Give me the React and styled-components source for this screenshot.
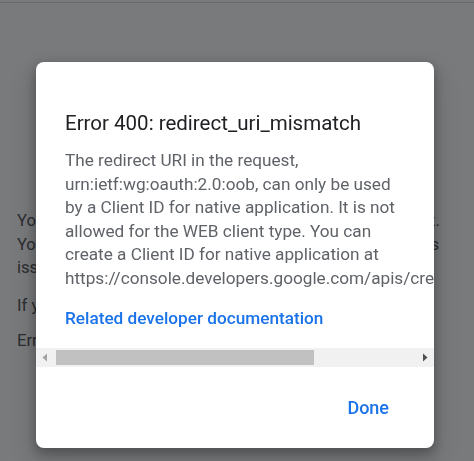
import React from "react";
import styled, { createGlobalStyle } from "styled-components";

const Global = createGlobalStyle`
  html, body { margin: 0; padding: 0; background: #ffffff; }
  body { font-family: Roboto, "Noto Sans", Arial, sans-serif; overflow: hidden; }
  * { box-sizing: border-box; }
`;

const Page = styled.div`
  width: 474px;
  height: 461px;
  background: #ffffff;
  position: relative;
`;

const TopRule = styled.div`
  height: 3px;
  border-bottom: 1px solid #d2d4d8;
`;

const PageBody = styled.div`
  padding: 206px 0 0 17px;
  color: #3c4043;
  font-size: 16.6px;
  line-height: 23.5px;
`;

const PagePara = styled.p`
  margin: 0 0 ${(p) => p.$gap || 14}px 0;
  white-space: nowrap;
`;

const PageLine = styled.span`
  display: block;
  letter-spacing: ${(p) => p.$tight || 0}px;
`;

const Overlay = styled.div`
  position: fixed;
  inset: 0;
  background: rgba(32, 33, 36, 0.6);
  display: flex;
  align-items: flex-start;
  justify-content: flex-start;
  padding: 62px 0 0 36px;
`;

const Dialog = styled.div`
  width: 398px;
  height: 386px;
  background: #ffffff;
  border-radius: 8px;
  box-shadow: 0 4px 10px 2px rgba(0, 0, 0, 0.22), 0 12px 24px 4px rgba(0, 0, 0, 0.14);
  display: flex;
  flex-direction: column;
  overflow: hidden;
`;

const ScrollArea = styled.div`
  flex: 0 0 auto;
  overflow: hidden;
  padding: 49px 0 0 29px;
  height: 286px;
`;

const Title = styled.h1`
  margin: 0;
  font-family: Roboto, "Noto Sans", Arial, sans-serif;
  font-weight: 400;
  font-size: 20.5px;
  line-height: 24px;
  color: #202124;
  white-space: nowrap;
`;

const Body = styled.p`
  margin: 14px 0 0 0;
  font-size: 17.2px;
  line-height: 23.6px;
  color: #5f6368;
  white-space: nowrap;
`;

const DocLink = styled.a`
  display: block;
  margin-top: 15px;
  font-size: 17.2px;
  line-height: 24px;
  font-weight: 500;
  color: #1a73e8;
  text-decoration: none;
  white-space: nowrap;
`;

const Scrollbar = styled.div`
  height: 19px;
  background: #f1f1f1;
  display: flex;
  align-items: center;
  position: relative;
`;

const ScrollButton = styled.div`
  width: 17px;
  height: 19px;
  display: flex;
  align-items: center;
  justify-content: center;
  flex: 0 0 auto;
`;

const Track = styled.div`
  flex: 1;
  height: 19px;
  display: flex;
  align-items: center;
  padding-left: 3px;
`;

const Thumb = styled.div`
  height: 15px;
  background: #c1c1c1;
`;

const Footer = styled.div`
  flex: 1;
  display: flex;
  align-items: center;
  justify-content: flex-end;
  padding: 0 37px 0 0;
`;

const DoneButton = styled.button`
  border: none;
  background: transparent;
  padding: 8px 8px;
  font-family: Roboto, "Noto Sans", Arial, sans-serif;
  font-size: 18px;
  font-weight: 500;
  line-height: 20px;
  color: #1a73e8;
  cursor: pointer;
`;

const Arrow = ({ dir, color }) => (
  <svg width="7" height="9" viewBox="0 0 7 9">
    {dir === "left" ? (
      <path d="M6 0.5 L1.5 4.5 L6 8.5 Z" fill={color} />
    ) : (
      <path d="M1 0.5 L5.5 4.5 L1 8.5 Z" fill={color} />
    )}
  </svg>
);

export default function App() {
  return (
    <>
      <Global />
      <Page>
        <TopRule />
        <PageBody>
          <PagePara $gap={14}>
            <PageLine>You can't sign in because this app sent an invalid request.</PageLine>
            <PageLine $tight={-0.08}>You can try again later, or contact the developer about this</PageLine>
            <PageLine>issue. Learn more about this error</PageLine>
          </PagePara>
          <PagePara $gap={12}>
            If you are a developer of this app, see error details.
          </PagePara>
          <PagePara>Error 400: redirect_uri_mismatch</PagePara>
        </PageBody>
        <Overlay>
          <Dialog role="dialog">
            <ScrollArea>
              <Title>Error 400: redirect_uri_mismatch</Title>
              <Body>
                The redirect URI in the request,
                <br />
                urn:ietf:wg:oauth:2.0:oob, can only be used
                <br />
                by a Client ID for native application. It is not
                <br />
                allowed for the WEB client type. You can
                <br />
                create a Client ID for native application at
                <br />
                https://console.developers.google.com/apis/credentials/oauthclient
              </Body>
              <DocLink href="#">Related developer documentation</DocLink>
            </ScrollArea>
            <Scrollbar>
              <ScrollButton>
                <Arrow dir="left" color="#a3a3a3" />
              </ScrollButton>
              <Track>
                <Thumb style={{ width: "258px" }} />
              </Track>
              <ScrollButton>
                <Arrow dir="right" color="#505050" />
              </ScrollButton>
            </Scrollbar>
            <Footer>
              <DoneButton>Done</DoneButton>
            </Footer>
          </Dialog>
        </Overlay>
      </Page>
    </>
  );
}
